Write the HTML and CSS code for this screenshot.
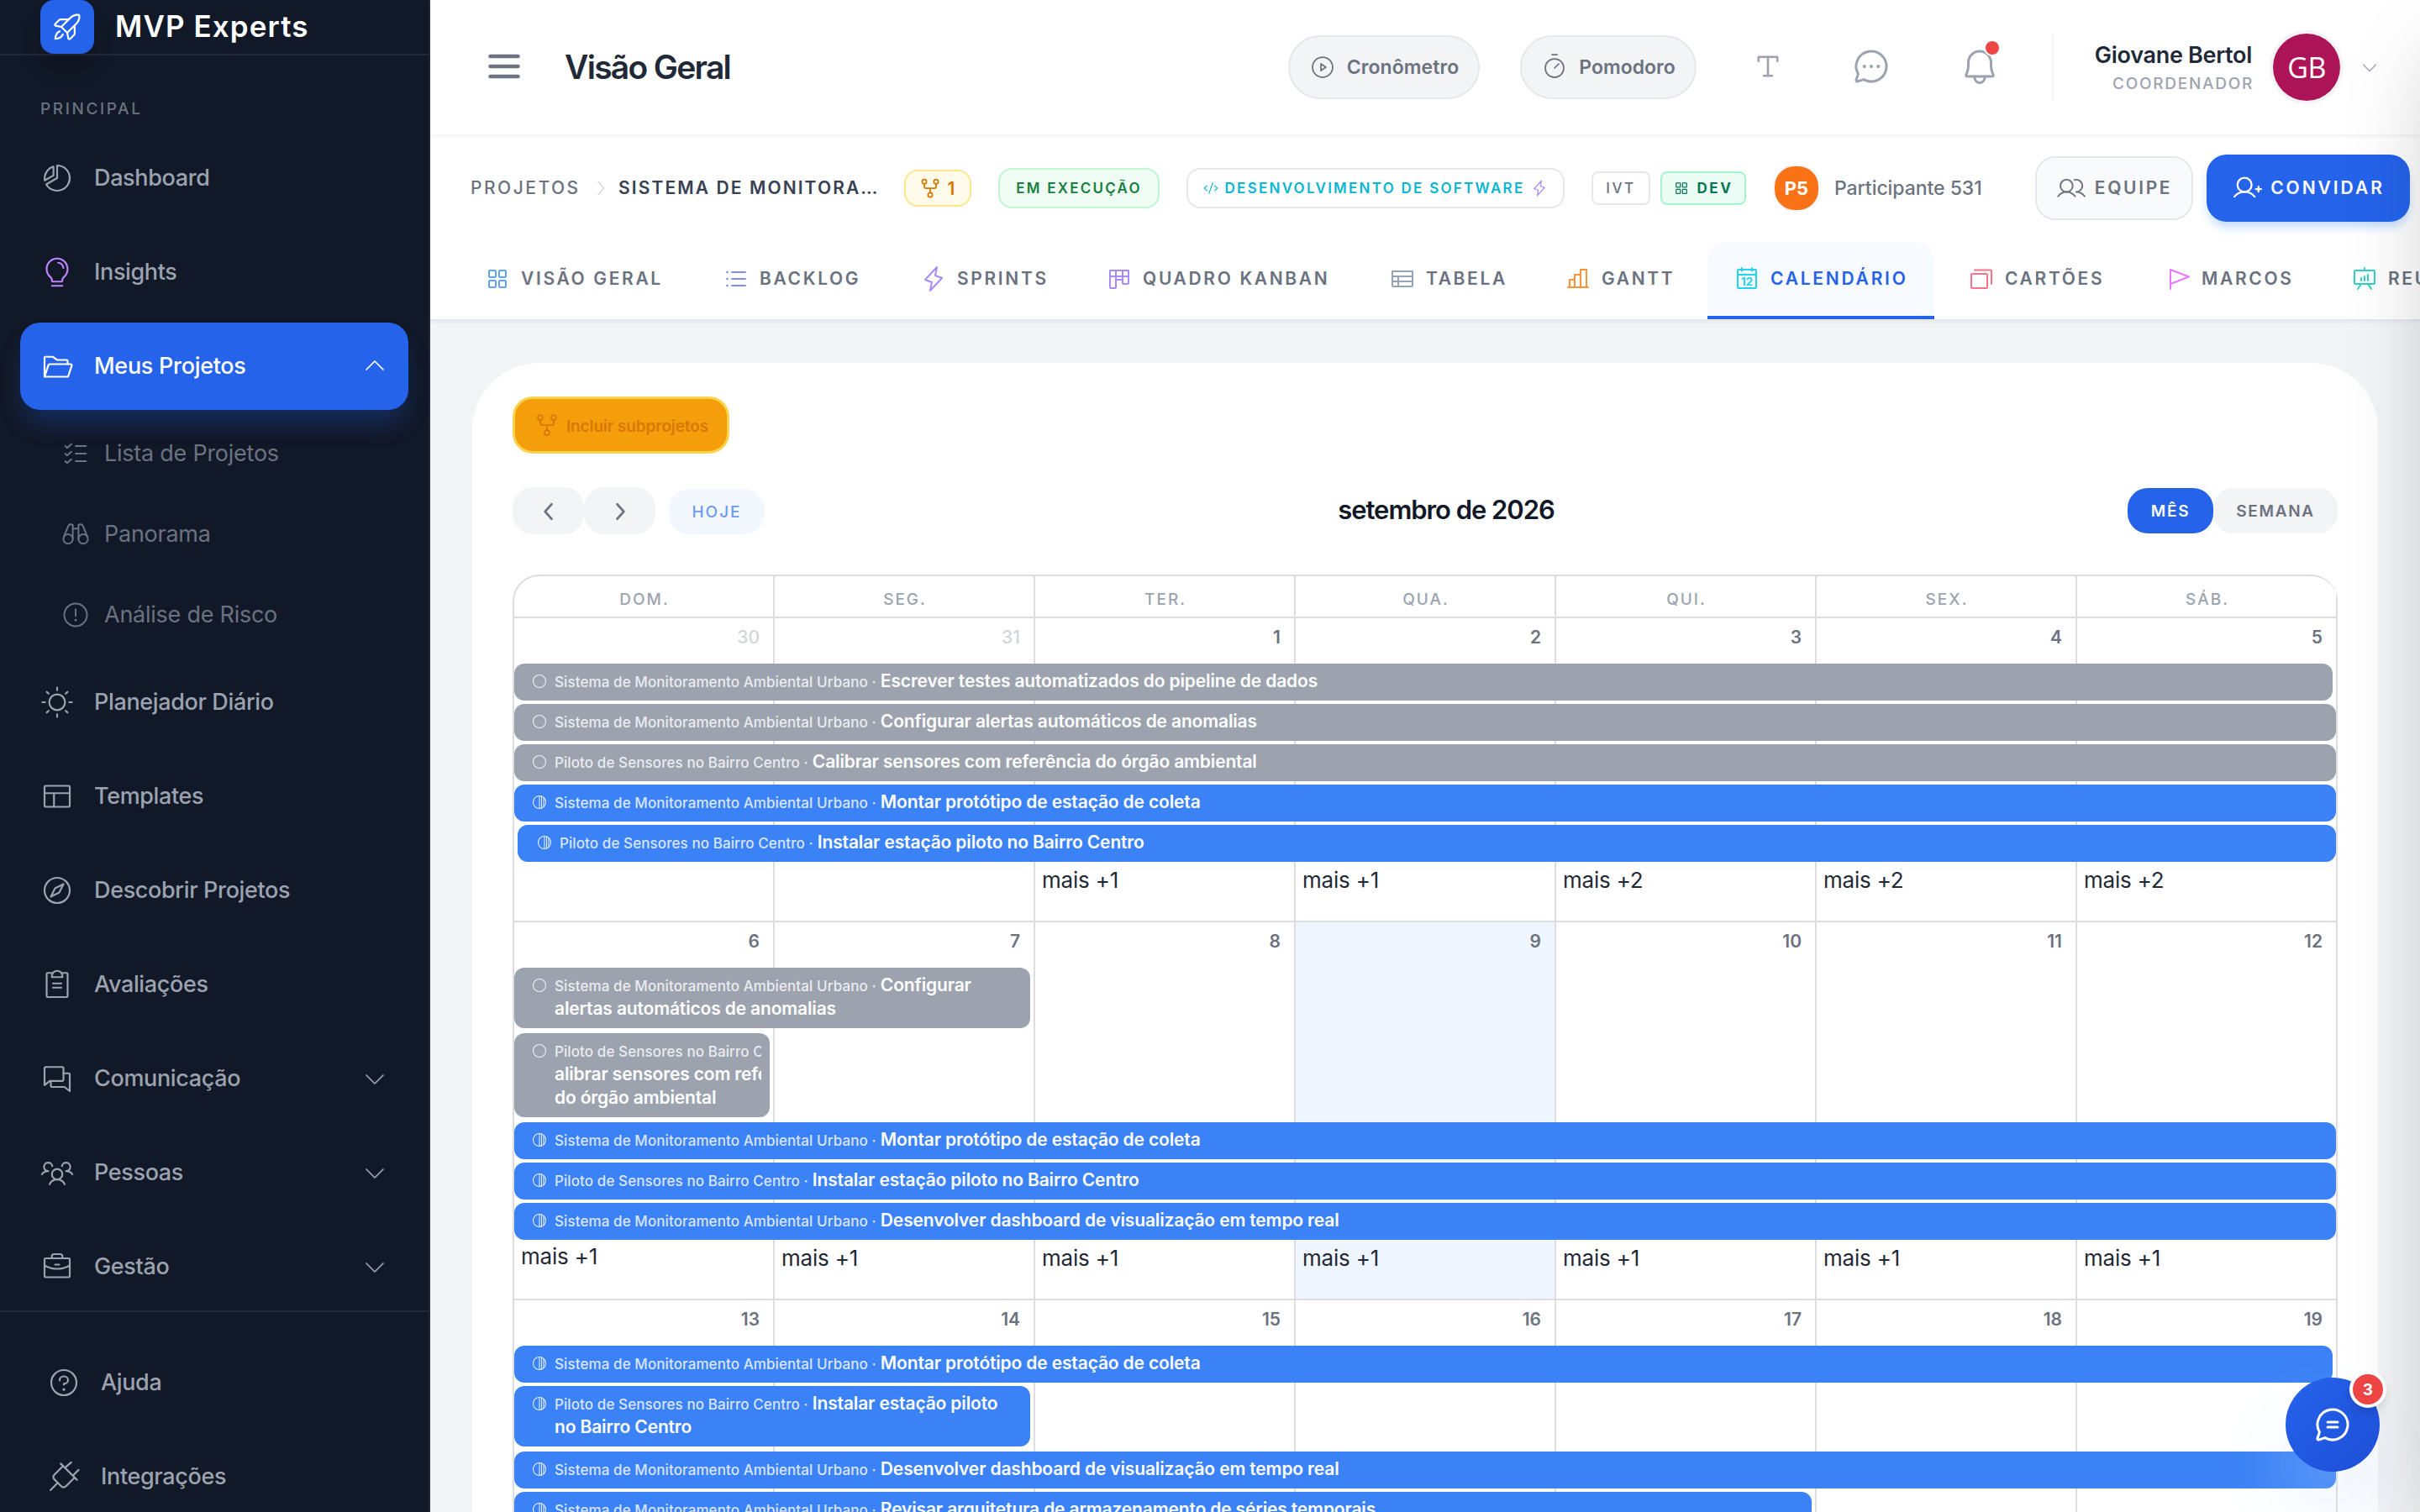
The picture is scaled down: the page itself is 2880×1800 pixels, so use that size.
FILE: index.html
```
<!DOCTYPE html>
<html lang="pt-BR">
<head>
    <meta charset="UTF-8">
    <meta name="viewport" content="width=device-width, initial-scale=1.0">
    <title>Calendário - MVP Experts</title>
    <link rel="stylesheet" href="styles.css">
</head>
<body>

    <!-- Ícones -->
    <svg class="sprite" xmlns="http://www.w3.org/2000/svg">
        <symbol id="rocket" viewBox="0 0 256 256"><path d="M94.1,184.6c-11.4,33.9-56.6,33.9-56.6,33.9s0-45.2,33.9-56.6"/><path d="M195.9,105.4,128,173.3,82.7,128l67.9-67.9C176.3,34.4,202,34.7,213,36.3a7.8,7.8,0,0,1,6.7,6.7C221.3,54,221.6,79.7,195.9,105.4Z"/><path d="M184.6,116.7v64.6a8,8,0,0,1-2.4,5.6l-32.3,32.4a8,8,0,0,1-13.5-4.1L128,173.3"/><path d="M139.3,71.4H74.7a8,8,0,0,0-5.6,2.4L36.7,106.1a8,8,0,0,0,4.1,13.5L82.7,128"/></symbol>
        <symbol id="pie" viewBox="0 0 256 256"><path d="M128,128V32A96,96,0,1,1,44.9,176Z"/><path d="M100,40V108L34,146A96,96,0,0,1,100,40Z"/></symbol>
        <symbol id="bulb" viewBox="0 0 256 256"><path d="M88,232h80"/><path d="M78.7,167A79.87,79.87,0,0,1,48,104.45C47.76,61.09,82.72,25,126.07,24a80,80,0,0,1,51.34,142.9A24.3,24.3,0,0,0,168,186v6a8,8,0,0,1-8,8H96a8,8,0,0,1-8-8v-6A24.11,24.11,0,0,0,78.7,167Z"/><path d="M136,56c20,3.37,36.61,20,40,40"/></symbol>
        <symbol id="folder" viewBox="0 0 256 256"><path d="M32,208V64a8,8,0,0,1,8-8H93.33a8,8,0,0,1,4.8,1.6l27.74,20.8a8,8,0,0,0,4.8,1.6H200a8,8,0,0,1,8,8v24"/><path d="M32,208l30.18-90.53A8,8,0,0,1,69.77,112H232a8,8,0,0,1,7.59,10.53L211.09,208Z"/></symbol>
        <symbol id="checks" viewBox="0 0 256 256"><path d="M128,128H216M128,64H216M128,192H216M92,48,56,80,40,64M92,112,56,144,40,128M92,176,56,208,40,192"/></symbol>
        <symbol id="binoculars" viewBox="0 0 256 256"><circle cx="64" cy="168" r="40"/><circle cx="192" cy="168" r="40"/><path d="M27,152,66,58a24,24,0,0,1,38-8V168M229,152,190,58a24,24,0,0,0-38-8V168M104,80h48"/></symbol>
        <symbol id="warning" viewBox="0 0 256 256"><circle cx="128" cy="128" r="96"/><path d="M128,136V80"/><circle class="dot" cx="128" cy="172" r="10"/></symbol>
        <symbol id="sun" viewBox="0 0 256 256"><circle cx="128" cy="128" r="60"/><path d="M128,36V16M63,63,49,49M63,193,49,207M193,63,207,49M193,193,207,207M36,128H16M128,220v20M220,128h20"/></symbol>
        <symbol id="layout" viewBox="0 0 256 256"><rect x="32" y="48" width="192" height="160" rx="8"/><path d="M104,104V208M32,104H224"/></symbol>
        <symbol id="compass" viewBox="0 0 256 256"><circle cx="128" cy="128" r="96"/><path d="M144,144,80,176,112,112,176,80Z"/></symbol>
        <symbol id="clipboard" viewBox="0 0 256 256"><path d="M96,152h64M96,120h64M160,40h40a8,8,0,0,1,8,8V216a8,8,0,0,1-8,8H56a8,8,0,0,1-8-8V48a8,8,0,0,1,8-8H96"/><path d="M88,72V64a40,40,0,0,1,80,0v8Z"/></symbol>
        <symbol id="chats" viewBox="0 0 256 256"><path d="M71.6,146.3,32,178V48a8,8,0,0,1,8-8H168a8,8,0,0,1,8,8v90.3a8,8,0,0,1-8,8Z"/><path d="M80,146.3V184a8,8,0,0,0,8,8h96.4L224,224V96a8,8,0,0,0-8-8H176"/></symbol>
        <symbol id="people" viewBox="0 0 256 256"><circle cx="128" cy="140" r="40"/><path d="M196,116a59.8,59.8,0,0,1,48,24M12,140a59.8,59.8,0,0,1,48-24M70.4,216a64.1,64.1,0,0,1,115.2,0M60,116A32,32,0,1,1,91.4,78M164.6,78A32,32,0,1,1,196,116"/></symbol>
        <symbol id="briefcase" viewBox="0 0 256 256"><rect x="32" y="64" width="192" height="144" rx="8"/><path d="M168,64V48a16,16,0,0,0-16-16H104A16,16,0,0,0,88,48V64M224,118.3A191.1,191.1,0,0,1,128,144a191.1,191.1,0,0,1-96-25.7M112,112h32"/></symbol>
        <symbol id="question" viewBox="0 0 256 256"><circle cx="128" cy="128" r="96"/><circle class="dot" cx="128" cy="180" r="10"/><path d="M128,144v-8c17.67,0,32-12.54,32-28s-14.33-28-32-28S96,92.54,96,108v4"/></symbol>
        <symbol id="plug" viewBox="0 0 256 256"><path d="M104,28,228,152M26,230,81,175M136,60,184,18M196,120,240,76"/><path d="M122,46,54.6,113.4a24,24,0,0,0,0,34L108.6,201.4a24,24,0,0,0,34,0L210,134"/></symbol>
        <symbol id="menu" viewBox="0 0 256 256"><path d="M40,128H216M40,64H216M40,192H216"/></symbol>
        <symbol id="play" viewBox="0 0 256 256"><circle cx="128" cy="128" r="96"/><path d="M160,128,112,96V160Z"/></symbol>
        <symbol id="timer" viewBox="0 0 256 256"><circle cx="128" cy="136" r="88"/><path d="M128,136,168,96M104,8h48"/></symbol>
        <symbol id="type" viewBox="0 0 256 256"><path d="M128,56V200M96,200h64M56,88V56H200V88"/></symbol>
        <symbol id="chat-dots" viewBox="0 0 256 256"><path d="M79.9,211.1a96,96,0,1,0-35-35L32.4,213a8,8,0,0,0,10.6,10.6Z"/><circle class="dot" cx="84" cy="128" r="11"/><circle class="dot" cx="128" cy="128" r="11"/><circle class="dot" cx="172" cy="128" r="11"/></symbol>
        <symbol id="chat-text" viewBox="0 0 256 256"><path d="M79.9,211.1a96,96,0,1,0-35-35L32.4,213a8,8,0,0,0,10.6,10.6Z"/><path d="M96,112h64M96,144h64"/></symbol>
        <symbol id="bell" viewBox="0 0 256 256"><path d="M56.2,104a71.9,71.9,0,0,1,72.3-72c39.6.3,71.3,33.2,71.3,72.9V112c0,35.8,7.5,56.6,14.1,68a8,8,0,0,1-6.9,12H49a8,8,0,0,1-6.9-12c6.6-11.4,14.1-32.2,14.1-68Z"/><path d="M96,192v8a32,32,0,0,0,64,0v-8"/></symbol>
        <symbol id="down" viewBox="0 0 256 256"><path d="M208,96,128,176,48,96"/></symbol>
        <symbol id="up" viewBox="0 0 256 256"><path d="M48,160,128,80,208,160"/></symbol>
        <symbol id="left" viewBox="0 0 256 256"><path d="M160,48,88,128,160,208"/></symbol>
        <symbol id="right" viewBox="0 0 256 256"><path d="M96,48,168,128,96,208"/></symbol>
        <symbol id="fork" viewBox="0 0 256 256"><circle cx="64" cy="56" r="24"/><circle cx="192" cy="56" r="24"/><circle cx="128" cy="200" r="24"/><path d="M128,176V128M64,80v32a16,16,0,0,0,16,16h96a16,16,0,0,0,16-16V80"/></symbol>
        <symbol id="code" viewBox="0 0 256 256"><path d="M64,88,16,128,64,168M192,88,240,128,192,168M160,40,96,216"/></symbol>
        <symbol id="bolt" viewBox="0 0 256 256"><path d="M160,16,144,96,208,120,96,240,112,160,48,136Z"/></symbol>
        <symbol id="squares" viewBox="0 0 256 256"><rect x="48" y="48" width="64" height="64" rx="8"/><rect x="144" y="48" width="64" height="64" rx="8"/><rect x="48" y="144" width="64" height="64" rx="8"/><rect x="144" y="144" width="64" height="64" rx="8"/></symbol>
        <symbol id="users" viewBox="0 0 256 256"><circle cx="88" cy="108" r="52"/><path d="M155.4,57.9A54.5,54.5,0,0,1,169.5,56a52,52,0,0,1,0,104M16,197.4a88,88,0,0,1,144,0M169.5,160a87.9,87.9,0,0,1,72.1,37.4"/></symbol>
        <symbol id="user-plus" viewBox="0 0 256 256"><circle cx="108" cy="100" r="60"/><path d="M22.2,200a112,112,0,0,1,171.6,0M204,136h44M226,114v44"/></symbol>
        <symbol id="list" viewBox="0 0 256 256"><path d="M88,64H216M88,128H216M88,192H216"/><circle class="dot" cx="44" cy="64" r="11"/><circle class="dot" cx="44" cy="128" r="11"/><circle class="dot" cx="44" cy="192" r="11"/></symbol>
        <symbol id="kanban" viewBox="0 0 256 256"><path d="M40,48H216V168a8,8,0,0,1-8,8H168a8,8,0,0,1-8-8V48M96,48V208a8,8,0,0,1-8,8H48a8,8,0,0,1-8-8V48M40,104H216M96,136h64"/></symbol>
        <symbol id="table" viewBox="0 0 256 256"><path d="M32,56H224V192a8,8,0,0,1-8,8H40a8,8,0,0,1-8-8ZM32,104H224M32,152H224M88,104V200"/></symbol>
        <symbol id="bars" viewBox="0 0 256 256"><path d="M48,208V136H96M96,208V88h56M152,208V40h56V208M32,208H224"/></symbol>
        <symbol id="calendar" viewBox="0 0 256 256"><rect x="40" y="40" width="176" height="176" rx="8"/><path d="M176,24V52M80,24V52M40,88H216"/><text x="128" y="190" text-anchor="middle" class="cal-day">12</text></symbol>
        <symbol id="cards" viewBox="0 0 256 256"><rect x="32" y="80" width="152" height="136" rx="8"/><path d="M64,44H216a8,8,0,0,1,8,8V176"/></symbol>
        <symbol id="pennant" viewBox="0 0 256 256"><path d="M56,224V40L232,108,56,176"/></symbol>
        <symbol id="board" viewBox="0 0 256 256"><path d="M128,48V24M160,176l32,48M96,176,64,224M96,120v24M128,104v40M160,88v56"/><rect x="32" y="48" width="192" height="128" rx="8"/></symbol>
        <symbol id="circle" viewBox="0 0 256 256"><circle cx="128" cy="128" r="96"/></symbol>
        <symbol id="half" viewBox="0 0 256 256"><circle cx="128" cy="128" r="96"/><path d="M128,32V224M160,38V218M192,57V199"/></symbol>
    </svg>

    <div class="app">

        <aside class="sidebar">
            <div class="brand">
                <span class="brand-logo"><svg class="icon i40"><use href="#rocket"/></svg></span>
                <span class="brand-name">MVP Experts</span>
            </div>
            <div class="nav-title">PRINCIPAL</div>
            <nav class="nav">
                <a class="nav-item"><svg class="icon i40"><use href="#pie"/></svg><span>Dashboard</span></a>
                <a class="nav-item"><svg class="icon i40 purple"><use href="#bulb"/></svg><span>Insights</span></a>
                <a class="nav-item active"><svg class="icon i40"><use href="#folder"/></svg><span>Meus Projetos</span><svg class="icon i32 caret"><use href="#up"/></svg></a>
                <div class="subnav">
                    <a class="sub-item"><svg class="icon i36"><use href="#checks"/></svg><span>Lista de Projetos</span></a>
                    <a class="sub-item"><svg class="icon i36"><use href="#binoculars"/></svg><span>Panorama</span></a>
                    <a class="sub-item"><svg class="icon i36"><use href="#warning"/></svg><span>Análise de Risco</span></a>
                </div>
                <a class="nav-item"><svg class="icon i40"><use href="#sun"/></svg><span>Planejador Diário</span></a>
                <a class="nav-item"><svg class="icon i40"><use href="#layout"/></svg><span>Templates</span></a>
                <a class="nav-item"><svg class="icon i40"><use href="#compass"/></svg><span>Descobrir Projetos</span></a>
                <a class="nav-item"><svg class="icon i40"><use href="#clipboard"/></svg><span>Avaliações</span></a>
                <a class="nav-item"><svg class="icon i40"><use href="#chats"/></svg><span>Comunicação</span><svg class="icon i32 caret"><use href="#down"/></svg></a>
                <a class="nav-item"><svg class="icon i40"><use href="#people"/></svg><span>Pessoas</span><svg class="icon i32 caret"><use href="#down"/></svg></a>
                <a class="nav-item"><svg class="icon i40"><use href="#briefcase"/></svg><span>Gestão</span><svg class="icon i32 caret"><use href="#down"/></svg></a>
            </nav>
            <div class="nav nav-footer">
                <a class="nav-item"><svg class="icon i40"><use href="#question"/></svg><span>Ajuda</span></a>
                <a class="nav-item"><svg class="icon i40"><use href="#plug"/></svg><span>Integrações</span></a>
            </div>
        </aside>

        <div class="main">

            <header class="topbar">
                <svg class="icon i48 bold menu-btn"><use href="#menu"/></svg>
                <h1>Visão Geral</h1>
                <button class="pill pill-timer"><svg class="icon i32"><use href="#play"/></svg><span>Cronômetro</span></button>
                <button class="pill pill-pomodoro"><svg class="icon i32"><use href="#timer"/></svg><span>Pomodoro</span></button>
                <div class="actions">
                    <svg class="icon i40 regular"><use href="#type"/></svg>
                    <svg class="icon i48 regular"><use href="#chat-dots"/></svg>
                    <div class="bell"><svg class="icon i48 regular"><use href="#bell"/></svg><span class="bell-dot"></span></div>
                </div>
                <div class="user">
                    <div class="user-text">
                        <strong>Giovane Bertol</strong>
                        <small>COORDENADOR</small>
                    </div>
                    <span class="avatar">GB</span>
                    <svg class="icon i24"><use href="#down"/></svg>
                </div>
            </header>

            <section class="project">
                <div class="project-bar">
                    <span class="crumb">PROJETOS</span>
                    <svg class="icon i24 crumb-sep"><use href="#right"/></svg>
                    <span class="crumb-current">SISTEMA DE MONITORA…</span>
                    <span class="badge amber"><svg class="icon i28 regular"><use href="#fork"/></svg><span>1</span></span>
                    <span class="badge green">EM EXECUÇÃO</span>
                    <span class="badge type"><svg class="icon i18 regular"><use href="#code"/></svg><span>DESENVOLVIMENTO DE SOFTWARE</span><svg class="icon i20 bolt regular"><use href="#bolt"/></svg></span>
                    <span class="tag">IVT</span>
                    <span class="tag dev"><svg class="icon i20 regular"><use href="#squares"/></svg><span>DEV</span></span>
                    <span class="owner-avatar">P5</span>
                    <span class="owner">Participante 531</span>
                    <button class="btn team"><svg class="icon i36"><use href="#users"/></svg><span>EQUIPE</span></button>
                    <button class="btn invite"><svg class="icon i36 regular"><use href="#user-plus"/></svg><span>CONVIDAR</span></button>
                </div>
                <div class="tabs">
                    <a class="tab"><svg class="icon i32 c-blue"><use href="#squares"/></svg><span>VISÃO GERAL</span></a>
                    <a class="tab"><svg class="icon i32 c-indigo"><use href="#list"/></svg><span>BACKLOG</span></a>
                    <a class="tab"><svg class="icon i32 c-violet"><use href="#bolt"/></svg><span>SPRINTS</span></a>
                    <a class="tab"><svg class="icon i32 c-violet"><use href="#kanban"/></svg><span>QUADRO KANBAN</span></a>
                    <a class="tab"><svg class="icon i32 c-slate"><use href="#table"/></svg><span>TABELA</span></a>
                    <a class="tab"><svg class="icon i32 c-orange"><use href="#bars"/></svg><span>GANTT</span></a>
                    <a class="tab active"><svg class="icon i32 c-cyan"><use href="#calendar"/></svg><span>CALENDÁRIO</span></a>
                    <a class="tab"><svg class="icon i32 c-rose"><use href="#cards"/></svg><span>CARTÕES</span></a>
                    <a class="tab"><svg class="icon i32 c-pink"><use href="#pennant"/></svg><span>MARCOS</span></a>
                    <a class="tab"><svg class="icon i32 c-teal"><use href="#board"/></svg><span>REUNIÕES</span></a>
                </div>
            </section>

            <div class="content">
                <div class="card">
                    <button class="subprojects"><svg class="icon i32"><use href="#fork"/></svg><span>Incluir subprojetos</span></button>

                    <div class="toolbar">
                        <div class="toolbar-left">
                            <button class="arrow"><svg class="icon i28 bold"><use href="#left"/></svg></button>
                            <button class="arrow"><svg class="icon i28 bold"><use href="#right"/></svg></button>
                            <button class="today-btn">HOJE</button>
                        </div>
                        <h2>setembro de 2026</h2>
                        <div class="toolbar-right">
                            <button class="view month">MÊS</button>
                            <button class="view week-btn">SEMANA</button>
                        </div>
                    </div>

                    <div class="calendar">
                        <div class="weekdays">
                            <div>DOM.</div><div>SEG.</div><div>TER.</div><div>QUA.</div><div>QUI.</div><div>SEX.</div><div>SÁB.</div>
                        </div>

                        <div class="week week-1">
                            <div class="day c1 other">30</div><div class="day c2 other">31</div><div class="day c3">1</div><div class="day c4">2</div><div class="day c5">3</div><div class="day c6">4</div><div class="day c7">5</div>
                            <div class="event gray r2 full ends"><svg class="icon i20"><use href="#circle"/></svg><p><small>Sistema de Monitoramento Ambiental Urbano ·</small> Escrever testes automatizados do pipeline de dados</p></div>
                            <div class="event gray r3 full"><svg class="icon i20"><use href="#circle"/></svg><p><small>Sistema de Monitoramento Ambiental Urbano ·</small> Configurar alertas automáticos de anomalias</p></div>
                            <div class="event gray r4 full"><svg class="icon i20"><use href="#circle"/></svg><p><small>Piloto de Sensores no Bairro Centro ·</small> Calibrar sensores com referência do órgão ambiental</p></div>
                            <div class="event blue r5 full"><svg class="icon i20"><use href="#half"/></svg><p><small>Sistema de Monitoramento Ambiental Urbano ·</small> Montar protótipo de estação de coleta</p></div>
                            <div class="event blue r6 full starts"><svg class="icon i20"><use href="#half"/></svg><p><small>Piloto de Sensores no Bairro Centro ·</small> Instalar estação piloto no Bairro Centro</p></div>
                            <a class="more c3">mais +1</a><a class="more c4">mais +1</a><a class="more c5">mais +2</a><a class="more c6">mais +2</a><a class="more c7">mais +2</a>
                        </div>

                        <div class="week week-2">
                            <div class="day c1">6</div><div class="day c2">7</div><div class="day c3">8</div><div class="day c4 today">9</div><div class="day c5">10</div><div class="day c6">11</div><div class="day c7">12</div>
                            <div class="event gray r2 two tall"><svg class="icon i20"><use href="#circle"/></svg><p><small>Sistema de Monitoramento Ambiental Urbano ·</small> Configurar<br>alertas automáticos de anomalias</p></div>
                            <div class="event gray r3 one tall"><svg class="icon i20"><use href="#circle"/></svg><p><small>Piloto de Sensores no Bairro Centro ·</small> C<br>alibrar sensores com referência<br>do órgão ambiental</p></div>
                            <div class="event blue r4 full"><svg class="icon i20"><use href="#half"/></svg><p><small>Sistema de Monitoramento Ambiental Urbano ·</small> Montar protótipo de estação de coleta</p></div>
                            <div class="event blue r5 full"><svg class="icon i20"><use href="#half"/></svg><p><small>Piloto de Sensores no Bairro Centro ·</small> Instalar estação piloto no Bairro Centro</p></div>
                            <div class="event blue r6 full"><svg class="icon i20"><use href="#half"/></svg><p><small>Sistema de Monitoramento Ambiental Urbano ·</small> Desenvolver dashboard de visualização em tempo real</p></div>
                            <a class="more c1 first">mais +1</a><a class="more c2">mais +1</a><a class="more c3">mais +1</a><a class="more c4">mais +1</a><a class="more c5">mais +1</a><a class="more c6">mais +1</a><a class="more c7">mais +1</a>
                        </div>

                        <div class="week week-3">
                            <div class="day c1">13</div><div class="day c2">14</div><div class="day c3">15</div><div class="day c4">16</div><div class="day c5">17</div><div class="day c6">18</div><div class="day c7">19</div>
                            <div class="event blue r2 full ends"><svg class="icon i20"><use href="#half"/></svg><p><small>Sistema de Monitoramento Ambiental Urbano ·</small> Montar protótipo de estação de coleta</p></div>
                            <div class="event blue r3 two tall"><svg class="icon i20"><use href="#half"/></svg><p><small>Piloto de Sensores no Bairro Centro ·</small> Instalar estação piloto<br>no Bairro Centro</p></div>
                            <div class="event blue r4 full"><svg class="icon i20"><use href="#half"/></svg><p><small>Sistema de Monitoramento Ambiental Urbano ·</small> Desenvolver dashboard de visualização em tempo real</p></div>
                            <div class="event blue r5 five ends"><svg class="icon i20"><use href="#half"/></svg><p><small>Sistema de Monitoramento Ambiental Urbano ·</small> Revisar arquitetura de armazenamento de séries temporais</p></div>
                        </div>
                    </div>
                </div>
            </div>
        </div>

        <div class="drawer"></div>

        <button class="fab"><svg class="icon i48 regular"><use href="#chat-text"/></svg><span class="fab-count">3</span></button>
    </div>

</body>
</html>
```
FILE: styles.css
```
* {
    box-sizing: border-box;
}
body {
    margin: 0;
    font-family: "Inter", "Open Sans", sans-serif;
    color: #1f2937;
    background-color: #f3f4f6;
}
h1, h2, p {
    margin: 0;
}
button {
    font-family: inherit;
    border: none;
    padding: 0;
    margin: 0;
    display: flex;
    align-items: center;
    justify-content: center;
    flex-shrink: 0;
    cursor: pointer;
}
.app {
    display: flex;
    position: relative;
    width: 2880px;
    height: 1800px;
    overflow: hidden;
}

/* icons */
.sprite {
    display: none;
}
.icon {
    fill: none;
    stroke: currentColor;
    stroke-width: 14px;
    stroke-linecap: round;
    stroke-linejoin: round;
    flex-shrink: 0;
}
.regular { stroke-width: 16px; }
.bold { stroke-width: 24px; }
.dot { fill: currentColor; stroke: none; }
.cal-day { font-size: 104px; font-weight: 700; fill: currentColor; stroke: none; letter-spacing: 0; }
.i18 { width: 18px; height: 18px; }
.i20 { width: 20px; height: 20px; }
.i24 { width: 24px; height: 24px; }
.i28 { width: 28px; height: 28px; }
.i32 { width: 32px; height: 32px; }
.i36 { width: 36px; height: 36px; }
.i40 { width: 40px; height: 40px; }
.i48 { width: 48px; height: 48px; }

/* sidebar */
.sidebar {
    width: 512px;
    height: 1800px;
    flex-shrink: 0;
    background-color: #111827;
    border-right: 2px solid #1f2937;
    color: #9ca3af;
}
.brand {
    display: flex;
    align-items: center;
    height: 66px;
    padding-left: 48px;
    border-bottom: 2px solid #1f2937;
}
.brand-logo {
    display: flex;
    align-items: center;
    justify-content: center;
    width: 64px;
    height: 64px;
    margin-right: 25px;
    border-radius: 16px;
    background-color: #2563eb;
    color: #fff;
    box-shadow: 0 20px 30px -6px rgba(0, 0, 0, 0.2);
}
.brand-name {
    margin-top: -2px;
    color: #fff;
    font-size: 35px;
    font-weight: 600;
    letter-spacing: 1.1px;
}
.nav-title {
    padding: 52px 0 0 48px;
    height: 94px;
    font-size: 19px;
    line-height: 24px;
    font-weight: 550;
    letter-spacing: 2.6px;
    color: #6b7280;
}
.nav {
    display: flex;
    flex-direction: column;
    gap: 8px;
    padding: 0 24px;
}
.nav-item {
    display: flex;
    align-items: center;
    height: 104px;
    padding: 0 24px;
    border-radius: 24px;
    font-size: 27px;
    font-weight: 480;
    letter-spacing: -0.36px;
}
.nav-item span, .sub-item span {
    margin: -2px 0 0 24px;
}
.nav-item.active {
    background-color: #2563eb;
    color: #fff;
    letter-spacing: -0.3px;
    box-shadow: 0 20px 30px -6px rgba(37, 99, 235, 0.3);
}
.purple {
    color: #c084fc;
}
.caret {
    margin-left: auto;
}
.subnav {
    margin: -4px 0;
}
.sub-item {
    display: flex;
    align-items: center;
    height: 96px;
    padding-left: 48px;
    font-size: 27px;
    letter-spacing: -0.25px;
    color: #6b7280;
}
.sub-item span {
    margin-left: 16px;
}
.nav-footer {
    border-top: 2px solid #1f2937;
    padding: 32px;
}

/* top bar */
.main {
    width: 2368px;
    flex-shrink: 0;
}
.topbar {
    display: flex;
    align-items: center;
    height: 160px;
    padding-left: 64px;
    background-color: #fff;
    position: relative;
    box-shadow: 0 2px 4px rgba(0, 0, 0, 0.06);
}
.menu-btn {
    color: #6b7280;
    margin-top: -3px;
}
.topbar h1 {
    width: 861px;
    margin: -1px 0 0 48px;
    font-size: 39px;
    font-weight: 580;
    letter-spacing: -1.72px;
}
.pill {
    height: 76px;
    gap: 13px;
    border: 2px solid #e5e7eb;
    border-radius: 38px;
    background-color: #f3f4f6;
    color: #6b7280;
    font-size: 23px;
    font-weight: 570;
}
.pill-timer {
    width: 228px;
    letter-spacing: 0.1px;
}
.pill-pomodoro {
    width: 210px;
    margin-left: 48px;
}
.actions {
    display: flex;
    align-items: center;
    gap: 79px;
    margin: -3px 0 0 65px;
    color: #9ca3af;
}
.bell {
    position: relative;
    height: 48px;
    margin-left: 2px;
}
.bell-dot {
    position: absolute;
    top: -8px;
    right: -1px;
    width: 20px;
    height: 20px;
    border: 2px solid #fff;
    border-radius: 50%;
    background-color: #ef4444;
}
.user {
    display: flex;
    align-items: center;
    justify-content: flex-end;
    width: 390px;
    height: 80px;
    margin-left: 62px;
    border-left: 2px solid #f3f4f6;
    color: #9ca3af;
}
.user-text {
    display: flex;
    flex-direction: column;
    align-items: flex-end;
    gap: 8px;
    margin: 3px 25px 0 0;
}
.user-text strong {
    font-size: 27px;
    line-height: 28px;
    font-weight: 580;
    letter-spacing: -0.3px;
    color: #1f2937;
}
.user-text small {
    font-size: 19px;
    line-height: 24px;
    font-weight: 480;
    letter-spacing: 1.73px;
    margin-right: -2px;
}
.avatar {
    display: flex;
    align-items: center;
    justify-content: center;
    width: 80px;
    height: 80px;
    margin-right: 23px;
    border-radius: 50%;
    background-color: #ad1457;
    color: #fff;
    font-family: "Open Sans", sans-serif;
    font-size: 34px;
    letter-spacing: -0.5px;
    box-shadow: 0 0 0 4px #f3f4f6;
}

/* project header */
.project {
    height: 222px;
    background-color: #fff;
    border-bottom: 2px solid #e5e7eb;
    box-shadow: 0 2px 4px rgba(0, 0, 0, 0.05);
}
.project-bar {
    display: flex;
    align-items: center;
    height: 128px;
    padding-left: 48px;
    white-space: nowrap;
}
.crumb {
    width: 143px;
    margin-top: -2px;
    font-size: 21px;
    font-weight: 500;
    letter-spacing: 2.5px;
    color: #6b7280;
}
.crumb-sep {
    color: #d1d5db;
}
.crumb-current {
    width: 340px;
    margin: -2px 0 0 9px;
    font-size: 21px;
    font-weight: 570;
    letter-spacing: 2.1px;
    color: #374151;
}
.badge {
    display: flex;
    align-items: center;
    justify-content: center;
    height: 48px;
    margin-right: 32px;
    border: 2px solid;
    border-radius: 16px;
    font-size: 17px;
    font-weight: 570;
    letter-spacing: 2.25px;
}
.badge.amber {
    width: 80px;
    height: 44px;
    gap: 6px;
    font-size: 21px;
    color: #d97706;
    background-color: #fffbeb;
    border-color: #fde68a;
}
.badge.green {
    width: 192px;
    color: #15803d;
    background-color: #f0fdf4;
    border-color: #bbf7d0;
}
.badge.type {
    width: 450px;
    gap: 8px;
    color: #06b6d4;
    border-color: #e5e7eb;
}
.bolt {
    color: #a78bfa;
}
.tag {
    display: flex;
    align-items: center;
    justify-content: center;
    width: 70px;
    height: 40px;
    margin-right: 12px;
    border: 2px solid #e5e7eb;
    border-radius: 8px;
    font-size: 17px;
    font-weight: 500;
    letter-spacing: 2.6px;
    color: #6b7280;
}
.tag.dev {
    width: 102px;
    gap: 8px;
    margin-right: 34px;
    font-weight: 650;
    color: #047857;
    background-color: #ecfdf5;
    border-color: #a7f3d0;
}
.owner-avatar {
    display: flex;
    align-items: center;
    justify-content: center;
    width: 52px;
    height: 52px;
    border-radius: 24px;
    background-color: #f97316;
    color: #fff;
    font-size: 22px;
    font-weight: 650;
    box-shadow: 0 0 0 2px #f3f4f6;
}
.owner {
    width: 239px;
    margin-left: 19px;
    font-size: 23px;
    font-weight: 500;
    letter-spacing: -0.05px;
    color: #6b7280;
}
.btn {
    height: 76px;
    gap: 10px;
    border-radius: 24px;
    font-size: 21px;
    font-weight: 570;
}
.btn span {
    margin-top: -2px;
}
.team {
    width: 188px;
    border: 2px solid #e5e7eb;
    background-color: #f9fafb;
    color: #6b7280;
    letter-spacing: 2.65px;
}
.invite {
    width: 242px;
    height: 80px;
    margin-left: 16px;
    background-color: #2563eb;
    color: #fff;
    letter-spacing: 2.96px;
    box-shadow: 0 8px 12px -2px #bfdbfe;
}
.tabs {
    display: grid;
    grid-template-columns: 284px 235px 221px 337px 209px 200px 280px 234px 222px 260px;
    padding-left: 34px;
    height: 92px;
}
.tab {
    display: flex;
    align-items: center;
    gap: 12px;
    padding: 0 0 4px 30px;
    font-size: 21px;
    font-weight: 560;
    letter-spacing: 2.65px;
    color: #6b7280;
    white-space: nowrap;
}
.tab .icon {
    stroke-width: 16px;
}
.tab span {
    margin-top: -2px;
}
.tab.active {
    width: 270px;
    padding: 0 0 0 31px;
    border-bottom: 4px solid #2563eb;
    border-radius: 24px 24px 0 0;
    background-color: #f7faff;
    color: #2563eb;
    letter-spacing: 2.75px;
}
.c-blue { color: #60a5fa; }
.c-indigo { color: #818cf8; }
.c-violet { color: #a78bfa; }
.c-slate { color: #94a3b8; }
.c-orange { color: #fb923c; }
.c-cyan { color: #22d3ee; }
.c-rose { color: #fb7185; }
.c-pink { color: #e879f9; }
.c-teal { color: #2dd4bf; }

/* calendar card */
.content {
    padding: 50px;
}
.card {
    height: 1500px;
    padding: 40px 48px;
    border-radius: 80px;
    background-color: #fff;
}
.subprojects {
    width: 258px;
    height: 68px;
    gap: 7px;
    border: 3px solid #fcd34d;
    border-radius: 24px;
    background-color: #f59e0b;
    color: #d97706;
    font-size: 19px;
    font-weight: 570;
    letter-spacing: -0.1px;
}
.subprojects span {
    margin-top: 2px;
}
.toolbar {
    display: flex;
    align-items: center;
    justify-content: space-between;
    height: 56px;
    margin: 40px 0 48px;
}
.toolbar-left, .toolbar-right {
    display: flex;
    align-items: flex-end;
}
.arrow {
    width: 85px;
    height: 56px;
    padding-top: 2px;
    border-radius: 24px;
    background-color: #f3f4f6;
    color: #6b7280;
}
.today-btn {
    width: 114px;
    height: 54px;
    margin-left: 16px;
    border-radius: 24px;
    background-color: #f3f8ff;
    color: #6f9af2;
    font-size: 19px;
    font-weight: 550;
    letter-spacing: 2px;
}
.toolbar h2 {
    margin: -3px 0 0 0;
    font-size: 31px;
    font-weight: 580;
    letter-spacing: -1.05px;
    color: #111827;
}
.view {
    height: 54px;
    border-radius: 24px;
    font-size: 19px;
    font-weight: 570;
    letter-spacing: 1.67px;
    background-color: #f3f4f6;
    color: #6b7280;
}
.view.month {
    width: 102px;
    background-color: #2563eb;
    color: #fff;
}
.view.week-btn {
    width: 148px;
}

.calendar {
    width: 2172px;
    border: 2px solid #ddd;
    border-right: none;
    border-radius: 32px 32px 0 0;
    overflow: hidden;
}
.weekdays {
    display: grid;
    grid-template-columns: repeat(7, 310px);
    height: 50px;
    border-bottom: 2px solid #ddd;
}
.weekdays div {
    padding: 15px 0 0 2px;
    border-right: 2px solid #ddd;
    text-align: center;
    font-size: 19px;
    line-height: 26px;
    font-weight: 550;
    letter-spacing: 2px;
    color: #9ca3af;
}
.week {
    display: grid;
    grid-template-columns: repeat(7, 310px);
    grid-template-rows: 54px repeat(5, auto) 1fr;
    border-bottom: 2px solid #ddd;
}
.week-1 { height: 362px; }
.week-2 { height: 450px; }
.week-3 { height: 450px; }
.c1 { grid-column: 1; }
.c2 { grid-column: 2; }
.c3 { grid-column: 3; }
.c4 { grid-column: 4; }
.c5 { grid-column: 5; }
.c6 { grid-column: 6; }
.c7 { grid-column: 7; }
.r2 { grid-row: 2; }
.r3 { grid-row: 3; }
.r4 { grid-row: 4; }
.r5 { grid-row: 5; }
.r6 { grid-row: 6; }
.day {
    grid-row: 1 / 8;
    padding: 10px 16px 0 0;
    border-right: 2px solid #ddd;
    text-align: right;
    font-size: 21px;
    line-height: 26px;
    font-weight: 560;
    color: #6b7280;
}
.day.other {
    font-weight: 500;
    color: #d1d5db;
}
.day.today {
    background-color: #eff6ff;
}
.event {
    display: flex;
    height: 44px;
    margin: 0 2px 4px 0;
    padding: 6px 10px 0 20px;
    border-radius: 12px;
    color: #fff;
    font-size: 21px;
    font-weight: 580;
    line-height: 28px;
    letter-spacing: -0.15px;
    white-space: nowrap;
}
.event .icon {
    margin: 5px 8px 0 0;
    opacity: 0.85;
}
.event p {
    flex: 1;
    min-width: 0;
    margin-top: 1px;
    overflow: hidden;
}
.event small {
    font-size: 17px;
    font-weight: 500;
    letter-spacing: 0.09px;
    line-height: 20px;
    opacity: 0.8;
}
.event.gray { background-color: #9ca3af; }
.event.blue { background-color: #3b82f6; }
.full { grid-column: 1 / 8; }
.five { grid-column: 1 / 6; }
.two { grid-column: 1 / 3; }
.one { grid-column: 1; }
.event.ends { margin-right: 6px; }
.event.starts { margin-left: 4px; padding-left: 22px; }
.event.tall {
    height: auto;
    padding-bottom: 9px;
    margin: 0 6px 6px 0;
}
.more {
    grid-row: 7;
    padding: 2px 0 0 8px;
    font-size: 26px;
    line-height: 32px;
    letter-spacing: -0.2px;
    color: #1f2937;
}
.more.first {
    padding-top: 0;
}

/* closed drawer, only its shadow reaches the page */
.drawer {
    position: absolute;
    top: 0;
    left: 2880px;
    width: 800px;
    height: 1800px;
    box-shadow: 0 50px 100px -24px rgba(0, 0, 0, 0.25);
}
.fab {
    position: absolute;
    left: 2720px;
    top: 1640px;
    width: 112px;
    height: 112px;
    border-radius: 50%;
    background: linear-gradient(135deg, #2563eb, #1d4ed8);
    color: #fff;
    box-shadow: 0 50px 100px -24px #bfdbfe;
}
.fab-count {
    position: absolute;
    top: -8px;
    right: -8px;
    display: flex;
    align-items: center;
    justify-content: center;
    width: 44px;
    height: 44px;
    border: 4px solid #fff;
    border-radius: 50%;
    background-color: #ef4444;
    font-size: 19px;
    font-weight: 650;
    box-shadow: 0 8px 12px -2px rgba(0, 0, 0, 0.15);
}
```
